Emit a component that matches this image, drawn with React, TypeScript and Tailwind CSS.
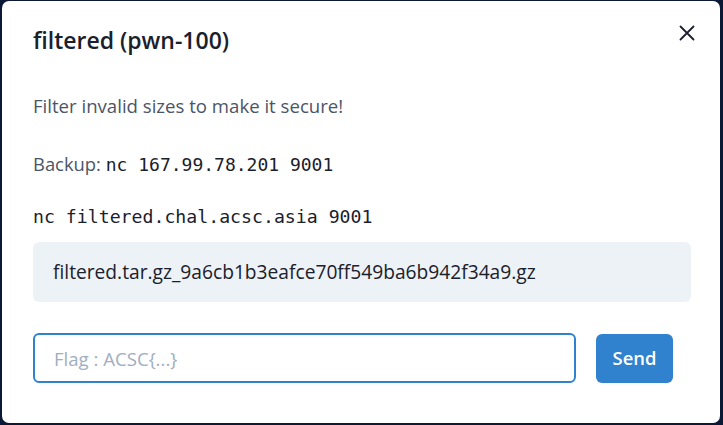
import React from "react";

const sans = "[font-family:Open_Sans,sans-serif]";
const mono = "[font-family:DejaVu_Sans_Mono,monospace]";

function CloseIcon() {
  return (
    <svg width="16" height="16" viewBox="0 0 16 16" fill="none">
      <path
        d="M1.5 1.5 L14.5 14.5 M14.5 1.5 L1.5 14.5"
        stroke="#1a202c"
        strokeWidth="1.8"
        strokeLinecap="round"
      />
    </svg>
  );
}

export default function App() {
  const [flag, setFlag] = React.useState("");
  return (
    <div className="w-[723px] h-[425px] bg-[#0b1836] overflow-hidden pt-[1px] pl-[2px]">
      <div
        className={`w-[718px] h-[422px] bg-white rounded-[7px] ${sans} text-[#1a202c] relative`}
      >
        <button
          className="absolute top-[24px] right-[25px] w-[16px] h-[16px] flex items-center justify-center"
          aria-label="Close"
        >
          <CloseIcon />
        </button>
        <div className="pl-[31px] pr-[29px] pt-[24px]">
          <h2 className="text-[23px] leading-[30px] font-semibold">
            filtered (pwn-100)
          </h2>
          <p className="mt-[38px] text-[18.6px] leading-[26px] text-[#4a5568]">
            Filter invalid sizes to make it secure!
          </p>
          <p className="mt-[32px] text-[18.4px] leading-[26px] text-[#4a5568]">
            Backup:{" "}
            <code className={`${mono} text-[18px] text-[#1a202c]`}>
              nc 167.99.78.201 9001
            </code>
          </p>
          <p className="mt-[26px] leading-[26px]">
            <code className={`${mono} text-[18.2px] text-[#1a202c]`}>
              nc filtered.chal.acsc.asia 9001
            </code>
          </p>
          <div className="mt-[12px] h-[60px] rounded-[6px] bg-[#edf2f7] flex items-center pl-[20px] text-[19.2px] text-[#1a202c]">
            filtered.tar.gz_9a6cb1b3eafce70ff549ba6b942f34a9.gz
          </div>
          <form
            className="mt-[31px] flex items-center gap-[20px]"
            onSubmit={(e) => e.preventDefault()}
          >
            <input
              autoFocus
              value={flag}
              onChange={(e) => setFlag(e.target.value)}
              placeholder="Flag : ACSC{...}"
              className={`w-[543px] h-[50px] rounded-[6px] border-2 border-[#3182ce] outline-none pl-[19px] text-[18.6px] ${sans} placeholder:text-[#a0aec0] text-[#1a202c]`}
            />
            <button
              type="submit"
              className="w-[77px] h-[49px] rounded-[6px] bg-[#3182ce] text-white text-[18.4px] font-semibold"
            >
              Send
            </button>
          </form>
        </div>
      </div>
    </div>
  );
}
